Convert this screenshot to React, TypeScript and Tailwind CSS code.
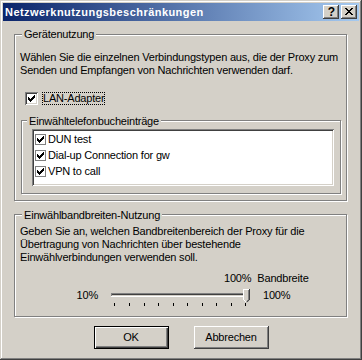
import React from "react";

function CheckMark() {
  return (
    <svg width="7" height="7" viewBox="0 0 7 7" shapeRendering="crispEdges" className="block">
      <rect x="6" y="0" width="1" height="1" fill="#000" />
      <rect x="5" y="1" width="2" height="1" fill="#000" />
      <rect x="0" y="2" width="1" height="1" fill="#000" />
      <rect x="4" y="2" width="3" height="1" fill="#000" />
      <rect x="0" y="3" width="2" height="1" fill="#000" />
      <rect x="3" y="3" width="3" height="1" fill="#000" />
      <rect x="0" y="4" width="5" height="1" fill="#000" />
      <rect x="1" y="5" width="3" height="1" fill="#000" />
      <rect x="2" y="6" width="1" height="1" fill="#000" />
    </svg>
  );
}

function CloseGlyph() {
  const px: [number, number, number][] = [
    [0, 0, 2], [6, 0, 2],
    [1, 1, 2], [5, 1, 2],
    [2, 2, 4],
    [3, 3, 2],
    [2, 4, 4],
    [1, 5, 2], [5, 5, 2],
    [0, 6, 2], [6, 6, 2],
  ];
  return (
    <svg width="8" height="7" viewBox="0 0 8 7" shapeRendering="crispEdges" className="block">
      {px.map(([x, y, w], i) => (
        <rect key={i} x={x} y={y} width={w} height="1" fill="#000" />
      ))}
    </svg>
  );
}

function Slider() {
  const ticks = [9, 24, 39, 53, 68, 82, 97, 111, 126, 140];
  return (
    <svg width="150" height="20" viewBox="0 0 150 20" shapeRendering="crispEdges" className="block ml-[7px]">
      <rect x="6" y="6" width="137" height="4" fill="#ffffff" />
      <rect x="6" y="6" width="136" height="3" fill="#808080" />
      <rect x="7" y="7" width="135" height="2" fill="#d4d0c8" />
      <rect x="7" y="7" width="134" height="1" fill="#404040" />
      {ticks.map((t) => (
        <rect key={t} x={t} y="16" width="1" height="3" fill="#000" />
      ))}
      <polygon points="138,2 145,2 145,12 141.5,15.5 138,12" fill="#d4d0c8" shapeRendering="auto" />
      <rect x="138" y="2" width="6" height="1" fill="#ffffff" />
      <rect x="138" y="2" width="1" height="11" fill="#ffffff" />
      <rect x="144" y="2" width="1" height="11" fill="#404040" />
      <rect x="143" y="3" width="1" height="10" fill="#808080" />
      <path d="M138.5 12.5 L141 15" stroke="#ffffff" strokeWidth="1" fill="none" shapeRendering="auto" />
      <path d="M144.5 12.5 L142 15.2" stroke="#404040" strokeWidth="1" fill="none" shapeRendering="auto" />
      <path d="M143.5 12.5 L141.5 14.5" stroke="#808080" strokeWidth="1" fill="none" shapeRendering="auto" />
    </svg>
  );
}

function ListItem({ label }: { label: string }) {
  return (
    <div className="flex items-center h-[16px] pl-[1px]">
      <div className="w-[11px] h-[11px] border border-[#808080] bg-white flex items-center justify-center">
        <CheckMark />
      </div>
      <span className="ml-[2px] whitespace-nowrap">{label}</span>
    </div>
  );
}

export default function App() {
  return (
    <div className="w-[362px] h-[360px] bg-[#d4d0c8] p-[3px] flex flex-col text-black text-[11px] leading-[13px] tracking-[-0.2px] font-['Liberation_Sans',Arial,sans-serif] shadow-[inset_-1px_-1px_0_#404040,inset_1px_1px_0_#d4d0c8,inset_-2px_-2px_0_#808080,inset_2px_2px_0_#ffffff]">
      {/* Title bar */}
      <div className="h-[18px] flex items-center justify-between pl-[2px] pr-[2px] bg-[linear-gradient(to_right,#0a246a,#a6caf0)]">
        <span className="text-white font-bold text-[11px] tracking-[0.45px] whitespace-nowrap">
          Netzwerknutzungsbeschränkungen
        </span>
        <div className="flex gap-[2px]">
          <div className="w-[16px] h-[14px] bg-[#d4d0c8] flex items-center justify-center shadow-[inset_-1px_-1px_0_#404040,inset_1px_1px_0_#ffffff,inset_-2px_-2px_0_#808080]">
            <span className="font-bold text-[12px] leading-[12px] tracking-normal pl-[1px]">?</span>
          </div>
          <div className="w-[16px] h-[14px] bg-[#d4d0c8] flex items-start pl-[4px] pt-[3px] shadow-[inset_-1px_-1px_0_#404040,inset_1px_1px_0_#ffffff,inset_-2px_-2px_0_#808080]">
            <CloseGlyph />
          </div>
        </div>
      </div>

      {/* Client area */}
      <div className="flex flex-col">
        {/* Group 1 */}
        <div className="relative ml-[11px] mt-[13px] w-[333px] h-[167px] border border-[#808080] shadow-[inset_1px_1px_0_#ffffff,1px_1px_0_#ffffff] pt-[16px] pl-[5px]">
          <span className="absolute -top-[7px] left-[7px] px-[2px] bg-[#d4d0c8] whitespace-nowrap">Gerätenutzung</span>
          <p className="whitespace-nowrap">
            Wählen Sie die einzelnen Verbindungstypen aus, die der Proxy zum
            <br />
            Senden und Empfangen von Nachrichten verwenden darf.
          </p>
          <div className="flex items-center h-[13px] mt-[15px] ml-[5px]">
            <div className="w-[13px] h-[13px] bg-white flex items-center justify-center shadow-[inset_1px_1px_0_#808080,inset_-1px_-1px_0_#ffffff,inset_2px_2px_0_#404040,inset_-2px_-2px_0_#d4d0c8]">
              <CheckMark />
            </div>
            <span className="ml-[4px] h-[13px] border border-dotted border-black px-[0px] leading-[11px] whitespace-nowrap">
              LAN-Adapter
            </span>
          </div>
          {/* Inner group */}
          <div className="relative ml-[1px] mt-[15px] w-[320px] h-[74px] border border-[#808080] shadow-[inset_1px_1px_0_#ffffff,1px_1px_0_#ffffff] pt-[8px] pl-[10px]">
            <span className="absolute -top-[6px] left-[5px] px-[2px] bg-[#d4d0c8] whitespace-nowrap">
              Einwähltelefonbucheinträge
            </span>
            <div className="w-[302px] h-[57px] bg-white pt-[2px] pl-[2px] shadow-[inset_1px_1px_0_#808080,inset_-1px_-1px_0_#ffffff,inset_2px_2px_0_#404040,inset_-2px_-2px_0_#d4d0c8]">
              <ListItem label="DUN test" />
              <ListItem label="Dial-up Connection for gw" />
              <ListItem label="VPN to call" />
            </div>
          </div>
        </div>

        {/* Group 2 */}
        <div className="relative ml-[11px] mt-[13px] w-[333px] h-[103px] border border-[#808080] shadow-[inset_1px_1px_0_#ffffff,1px_1px_0_#ffffff] pt-[10px] pl-[5px]">
          <span className="absolute -top-[6px] left-[7px] px-[2px] bg-[#d4d0c8] whitespace-nowrap">
            Einwählbandbreiten-Nutzung
          </span>
          <p className="whitespace-nowrap">
            Geben Sie an, welchen Bandbreitenbereich der Proxy für die
            <br />
            Übertragung von Nachrichten über bestehende
            <br />
            Einwählverbindungen verwenden soll.
          </p>
          <div className="flex mt-[8px] pl-[204px] whitespace-nowrap">
            <span>100%</span>
            <span className="ml-[6px]">Bandbreite</span>
          </div>
          <div className="flex items-start mt-[2px] h-[20px]">
            <span className="w-[78px] text-right mt-[2px]">10%</span>
            <Slider />
            <span className="ml-[8px] mt-[2px]">100%</span>
          </div>
        </div>

        {/* Buttons */}
        <div className="flex justify-center gap-[25px] mt-[9px]">
          <button className="w-[75px] h-[23px] bg-[#d4d0c8] border border-black flex items-center justify-center shadow-[inset_1px_1px_0_#ffffff,inset_-1px_-1px_0_#404040,inset_-2px_-2px_0_#808080]">
            OK
          </button>
          <button className="w-[75px] h-[23px] bg-[#d4d0c8] flex items-center justify-center shadow-[inset_-1px_-1px_0_#404040,inset_1px_1px_0_#ffffff,inset_-2px_-2px_0_#808080]">
            Abbrechen
          </button>
        </div>
      </div>
    </div>
  );
}
